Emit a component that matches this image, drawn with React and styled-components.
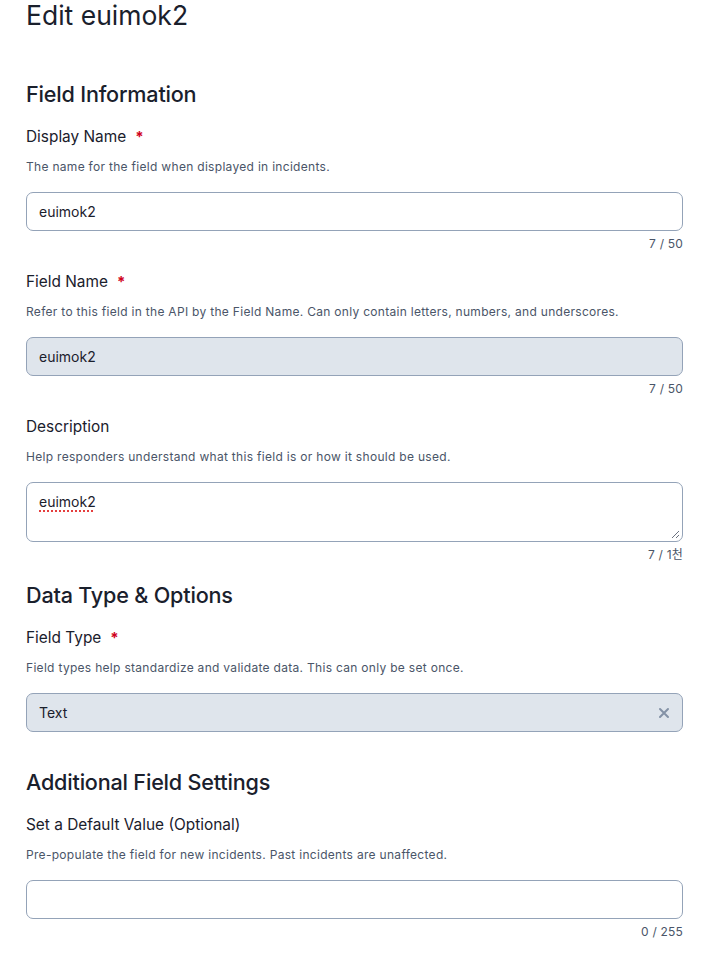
import styled, { createGlobalStyle } from "styled-components";

const GlobalStyle = createGlobalStyle`
    body {
        margin: 0;
        background: #ffffff;
        font-family: Inter, "Noto Sans CJK KR", sans-serif;
        color: #1a202c;
    }
`;

const Page = styled.div`
    padding: 0 31px 0 26px;
`;

const Title = styled.h1`
    margin: 0;
    font-size: 26.5px;
    line-height: 30px;
    font-weight: 400;
`;

const SectionTitle = styled.h2`
    margin: ${(p) => p.$top || 18}px 0 18px;
    font-size: 21.6px;
    line-height: 28px;
    font-weight: 500;
    letter-spacing: -0.2px;
`;

const Field = styled.div`
    display: flex;
    flex-direction: column;
    margin-bottom: ${(p) => (p.$last ? "0" : "19px")};
`;

const Label = styled.label`
    font-size: 15.4px;
    line-height: 22px;
    display: flex;
    align-items: center;
    gap: 9px;
`;

const Required = styled.span`
    color: #d0021b;
    font-size: 15px;
    font-weight: 700;
`;

const Help = styled.p`
    margin: 11px 0 17px;
    font-size: 12px;
    line-height: 16px;
    letter-spacing: 0.3px;
    color: #4a5568;
`;

const Box = styled.div`
    box-sizing: border-box;
    height: ${(p) => p.$height || 39}px;
    border: 1px solid #94a3b8;
    border-radius: 7px;
    background: ${(p) => (p.$disabled ? "#dfe5ec" : "#ffffff")};
    padding: ${(p) => (p.$multi ? "10px 12px" : "0 12px")};
    display: flex;
    align-items: ${(p) => (p.$multi ? "flex-start" : "center")};
    justify-content: space-between;
    font-size: 14px;
    line-height: 18px;
    color: #1a202c;
    position: relative;
`;

const Spell = styled.span`
    text-decoration: underline dotted #e53e3e;
    text-decoration-thickness: 2px;
    text-underline-offset: 3px;
`;

const Grip = styled.svg`
    position: absolute;
    right: 2px;
    bottom: 2px;
`;

const ClearIcon = styled.svg`
    color: #8492a6;
`;

const Counter = styled.div`
    margin-top: 5px;
    text-align: right;
    font-size: 12px;
    line-height: 16px;
    letter-spacing: 0.2px;
    color: #4a5568;
`;

const App = () => {
    return (
        <>
            <GlobalStyle />
            <Page>
                <Title>Edit euimok2</Title>

                <SectionTitle $top={50}>Field Information</SectionTitle>
                <Field>
                    <Label>
                        Display Name <Required>*</Required>
                    </Label>
                    <Help>The name for the field when displayed in incidents.</Help>
                    <Box>euimok2</Box>
                    <Counter>7 / 50</Counter>
                </Field>
                <Field>
                    <Label>
                        Field Name <Required>*</Required>
                    </Label>
                    <Help>
                        Refer to this field in the API by the Field Name. Can only contain letters,
                        numbers, and underscores.
                    </Help>
                    <Box $disabled>euimok2</Box>
                    <Counter>7 / 50</Counter>
                </Field>
                <Field $last>
                    <Label>Description</Label>
                    <Help>Help responders understand what this field is or how it should be used.</Help>
                    <Box $multi $height={60}>
                        <Spell>euimok2</Spell>
                        <Grip width="9" height="9" viewBox="0 0 9 9">
                            <path d="M8 1 L1 8 M8 5 L5 8" stroke="#6b7280" strokeWidth="1" />
                        </Grip>
                    </Box>
                    <Counter>7 / 1천</Counter>
                </Field>

                <SectionTitle>Data Type &amp; Options</SectionTitle>
                <Field $last>
                    <Label>
                        Field Type <Required>*</Required>
                    </Label>
                    <Help>Field types help standardize and validate data. This can only be set once.</Help>
                    <Box $disabled>
                        Text
                        <ClearIcon width="12" height="12" viewBox="0 0 12 12">
                            <path
                                d="M2 2 L10 10 M10 2 L2 10"
                                stroke="currentColor"
                                strokeWidth="2"
                                strokeLinecap="round"
                            />
                        </ClearIcon>
                    </Box>
                </Field>

                <SectionTitle $top={36}>Additional Field Settings</SectionTitle>
                <Field>
                    <Label>Set a Default Value (Optional)</Label>
                    <Help>Pre-populate the field for new incidents. Past incidents are unaffected.</Help>
                    <Box />
                    <Counter>0 / 255</Counter>
                </Field>
            </Page>
        </>
    );
};

export default App;
